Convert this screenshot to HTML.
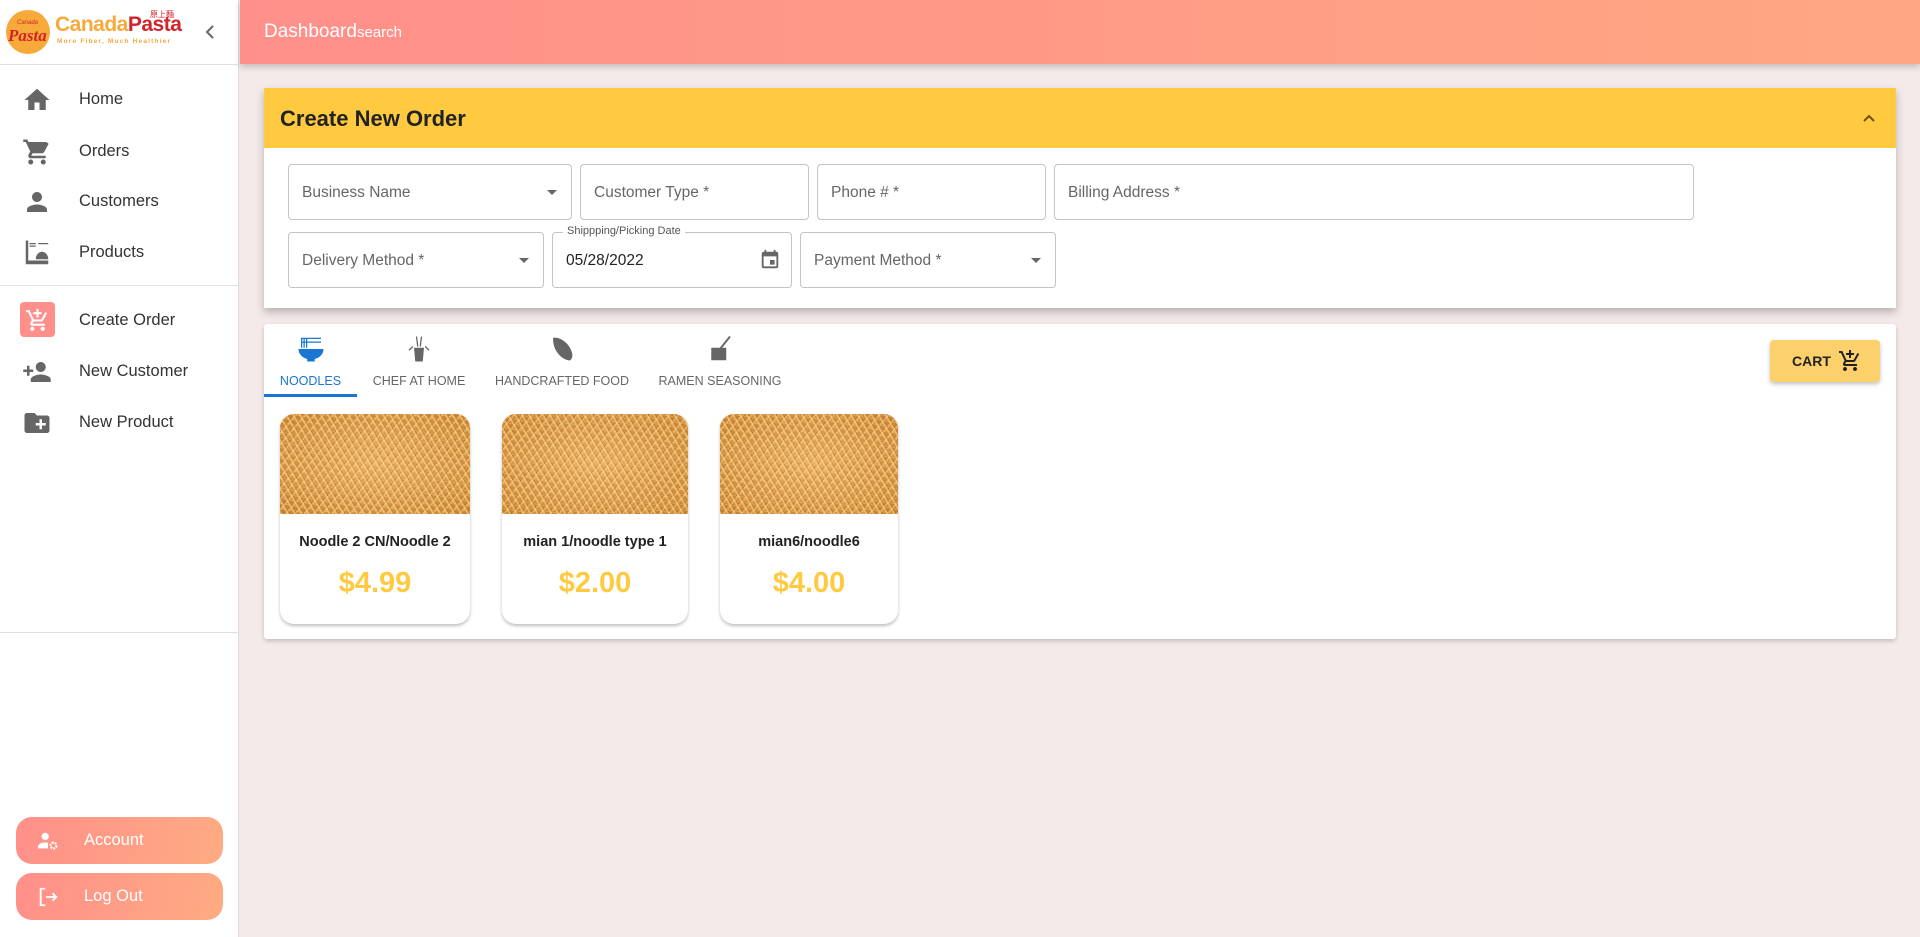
<!DOCTYPE html>
<html><head><meta charset="utf-8"><style>
*{box-sizing:border-box;margin:0;padding:0}
body{width:1920px;height:937px;background:#f4eaea;font-family:"Liberation Sans",sans-serif;position:relative;overflow:hidden;color:#333}
.side{position:absolute;left:0;top:0;width:239px;height:937px;background:#fff;border-right:1px solid #e0dcdc}
.hr{position:absolute;left:0;width:239px;height:1px;background:#e0e0e0}
.nav{position:absolute;left:0;height:40px;width:239px}
.nav svg{position:absolute;left:22px;top:6px;width:30px;height:30px}
.nav span{position:absolute;left:79px;top:11px;font-size:16.5px;color:#333}
.btn{position:absolute;left:16px;width:207px;height:47px;border-radius:16px;background:linear-gradient(100deg,#ff8f8a,#ffab82);color:#fff;font-size:16.5px}
.btn span{position:absolute;left:68px;top:14px}
.btn svg{position:absolute;left:21px;top:13px}
.head{position:absolute;left:240px;top:0;width:1680px;height:64px;background:linear-gradient(90deg,#ff8f8a,#ffa782);box-shadow:0 3px 6px rgba(0,0,0,.2)}
.head span{position:absolute;left:24px;top:21px;color:#fff;font-size:19px}
.card{position:absolute;background:#fff;box-shadow:0 2px 5px rgba(0,0,0,.2)}
.f{position:absolute;border:1px solid #c4c4c4;border-radius:4px;height:56px;font-size:15.5px;color:#666}
.f span{position:absolute;left:13px;top:19px}
.f .dd{position:absolute;right:14px;top:25px;width:0;height:0;border-left:5px solid transparent;border-right:5px solid transparent;border-top:5px solid #666}
.tab{position:absolute;top:334px;text-align:center;font-size:12.5px;color:#666;white-space:nowrap}
.tab svg{display:block;margin:0 auto 10px}
.p{position:absolute;top:414px;height:210px;background:#fff;border-radius:14px;box-shadow:0 2px 3px rgba(0,0,0,.25);overflow:hidden;text-align:center}
.img{height:100px;background:
repeating-linear-gradient(60deg,rgba(255,220,150,.5) 0 2px,rgba(170,100,30,.35) 2px 3px,transparent 3px 6px),
repeating-linear-gradient(-50deg,rgba(255,215,140,.45) 0 2px,rgba(160,90,20,.3) 2px 3px,transparent 3px 7px),
repeating-linear-gradient(10deg,rgba(250,200,120,.4) 0 1px,transparent 1px 5px),
radial-gradient(ellipse at 50% 50%,#eab064,#c88230)}
.p b{display:block;font-size:14.5px;color:#222;margin-top:20px}
.p i{display:block;font-style:normal;font-weight:bold;font-size:29px;color:#ffc940;margin-top:17px}
</style></head><body>
<div class="side">
 <svg style="position:absolute;left:5px;top:9px" width="46" height="46" viewBox="0 0 46 46"><circle cx="23" cy="23" r="22" fill="#f7a93a"/><text x="3" y="32" font-family="Liberation Serif" font-style="italic" font-weight="bold" font-size="17" fill="#d2232a">Pasta</text><text x="12" y="15" font-size="6" font-style="italic" fill="#d2232a">Canada</text></svg>
 <div style="position:absolute;left:55px;top:13px;font-weight:bold;font-size:21px;letter-spacing:-.5px"><span style="color:#f7a93a">Canada</span><span style="color:#d2232a">Pasta</span></div>
 <div style="position:absolute;left:57px;top:38px;font-size:6.5px;font-weight:bold;color:#f7a93a;letter-spacing:1.2px">More Fiber, Much Healthier</div>
 <div style="position:absolute;left:150px;top:9px;font-size:8px;color:#d2232a;font-family:'Noto Sans CJK SC',sans-serif">原上麵</div>
 <svg style="position:absolute;left:204px;top:24px" width="12" height="16" viewBox="0 0 12 16"><path d="M9 2L3 8l6 6" stroke="#666" stroke-width="2" fill="none"/></svg>
 <div class="hr" style="top:64px"></div>
 <div class="nav" style="top:79px"><svg viewBox="0 0 24 24"><path fill="#666" d="M10 20v-6h4v6h5v-8h3L12 3 2 12h3v8z"/></svg><span>Home</span></div>
 <div class="nav" style="top:131px"><svg viewBox="0 0 24 24"><path fill="#666" d="M7 18c-1.1 0-2 .9-2 2s.9 2 2 2 2-.9 2-2-.9-2-2-2zM1 2v2h2l3.6 7.6-1.4 2.4c-.1.3-.2.6-.2 1 0 1.1.9 2 2 2h12v-2H7.4l1.1-2h7.5c.8 0 1.4-.4 1.7-1l3.6-6.5L19.6 4H5.2l-.9-2H1zm16 16c-1.1 0-2 .9-2 2s.9 2 2 2 2-.9 2-2-.9-2-2-2z"/></svg><span>Orders</span></div>
 <div class="nav" style="top:181px"><svg viewBox="0 0 24 24"><path fill="#666" d="M12 12c2.2 0 4-1.8 4-4s-1.8-4-4-4-4 1.8-4 4 1.8 4 4 4zm0 2c-2.7 0-8 1.3-8 4v2h16v-2c0-2.7-5.3-4-8-4z"/></svg><span>Customers</span></div>
 <div class="nav" style="top:232px"><svg viewBox="0 0 24 24"><path fill="#666" d="M3 2h2v16h16v3H3zM6 4h5v1H6zM6 6h5v1H6zM13 4h8v1h-8zM11 17c0-4 3-6 5-6s5 2 5 6z"/></svg><span>Products</span></div>
 <div class="hr" style="top:285px"></div>
 <div class="nav" style="top:300px"><div style="position:absolute;left:20px;top:2px;width:35px;height:35px;background:#ff8f8a;border-radius:4px"></div><svg viewBox="0 0 24 24" style="left:25px;top:8px;width:25px;height:25px"><path fill="#fff" d="M11 9h2V6h3V4h-3V1h-2v3H8v2h3v3zm-4 9c-1.1 0-2 .9-2 2s.9 2 2 2 2-.9 2-2-.9-2-2-2zm10 0c-1.1 0-2 .9-2 2s.9 2 2 2 2-.9 2-2-.9-2-2-2zM7.2 14.8l.9-1.8h7.5c.8 0 1.4-.4 1.7-1l3.9-7-1.7-1-3.9 7H8.5L4.3 2H1v2h2l3.6 7.6-1.4 2.4C4.5 15.4 5.4 17 7 17h12v-2H7.4z"/></svg><span>Create Order</span></div>
 <div class="nav" style="top:351px"><svg viewBox="0 0 24 24"><path fill="#666" d="M15 12c2.2 0 4-1.8 4-4s-1.8-4-4-4-4 1.8-4 4 1.8 4 4 4zm-9-2V7H4v3H1v2h3v3h2v-3h3v-2H6zm9 4c-2.7 0-8 1.3-8 4v2h16v-2c0-2.7-5.3-4-8-4z"/></svg><span>New Customer</span></div>
 <div class="nav" style="top:402px"><svg viewBox="0 0 24 24"><path fill="#666" d="M20 6h-8l-2-2H4c-1.1 0-2 .9-2 2v12c0 1.1.9 2 2 2h16c1.1 0 2-.9 2-2V8c0-1.1-.9-2-2-2zm-1 8h-3v3h-2v-3h-3v-2h3V9h2v3h3v2z"/></svg><span>New Product</span></div>
 <div class="hr" style="top:632px"></div>
 <div class="btn" style="top:817px"><svg width="22" height="22" viewBox="0 0 24 24"><circle cx="9" cy="7" r="4" fill="#fff"/><path fill="#fff" d="M1 20v-2c0-3 5-4.5 8-4.5 1 0 2 .1 3 .4V20z"/><circle cx="18" cy="17" r="3.2" fill="none" stroke="#fff" stroke-width="2.4" stroke-dasharray="2 1.2"/></svg><span>Account</span></div>
 <div class="btn" style="top:873px"><svg width="22" height="22" viewBox="0 0 24 24"><path d="M9 3H4v18h5M10 12h11M17 8l4 4-4 4" stroke="#fff" stroke-width="2" fill="none"/></svg><span>Log Out</span></div>
</div>
<div class="head"><span>Dashboard<small style="font-size:15px">search</small></span></div>

<div class="card" style="left:264px;top:88px;width:1632px;height:220px;box-shadow:0 4px 8px rgba(0,0,0,.25)">
 <div style="height:60px;background:#ffca40;position:relative"><span style="position:absolute;left:16px;top:18px;font-size:22px;font-weight:bold;color:#222">Create New Order</span>
 <svg style="position:absolute;right:20px;top:25px" width="14" height="10" viewBox="0 0 14 10"><path d="M2 8l5-5 5 5" stroke="#6b5218" stroke-width="2" fill="none"/></svg></div>
</div>
<div class="f" style="left:288px;top:164px;width:284px"><span>Business Name</span><div class="dd"></div></div>
<div class="f" style="left:580px;top:164px;width:229px"><span>Customer Type *</span></div>
<div class="f" style="left:817px;top:164px;width:229px"><span>Phone # *</span></div>
<div class="f" style="left:1054px;top:164px;width:640px"><span>Billing Address *</span></div>
<div class="f" style="left:288px;top:232px;width:256px"><span>Delivery Method *</span><div class="dd"></div></div>
<div class="f" style="left:552px;top:232px;width:240px"><span style="color:#222">05/28/2022</span>
 <div style="position:absolute;left:10px;top:-8px;background:#fff;padding:0 4px;font-size:11px;color:#555">Shippping/Picking Date</div>
 <svg style="position:absolute;right:10px;top:16px" width="22" height="22" viewBox="0 0 24 24"><path fill="#666" d="M17 12h-5v5h5v-5zM16 1v2H8V1H6v2H5c-1.1 0-2 .9-2 2v14c0 1.1.9 2 2 2h14c1.1 0 2-.9 2-2V5c0-1.1-.9-2-2-2h-1V1h-2zm3 18H5V8h14v11z"/></svg></div>
<div class="f" style="left:800px;top:232px;width:256px"><span>Payment Method *</span><div class="dd"></div></div>

<div class="card" style="left:264px;top:324px;width:1632px;height:315px;border-radius:3px"></div>
<div class="tab" style="left:264px;width:93px;color:#1976d2"><svg width="30" height="30" viewBox="0 0 24 24"><path fill="#1976d2" d="M2 12h20c0 4-3 7-7 8v2H9v-2c-4-1-7-4-7-8zM4 3h1v8H4zM6 3h1v8H6zM8 3h1v8H8zM4 3h16v1H4zM4 6h16v1H4z"/></svg>NOODLES</div>
<div style="position:absolute;left:264px;top:394px;width:93px;height:3px;background:#1976d2"></div>
<div class="tab" style="left:367px;width:104px"><svg width="30" height="30" viewBox="0 0 24 24"><path fill="#666" d="M8 11h8l-1 11H9z"/><path d="M11 10l-1-8M13 10l1-8M7 10L4 13M17 10l3 3" stroke="#666" stroke-width="1"/></svg>CHEF AT HOME</div>
<div class="tab" style="left:490px;width:144px"><svg width="30" height="30" viewBox="0 0 24 24"><path fill="#666" d="M5 3c5-1 13 4 15 12 1 4-1 7-3 6C11 20 4 12 5 3z"/></svg>HANDCRAFTED FOOD</div>
<div class="tab" style="left:655px;width:130px"><svg width="30" height="30" viewBox="0 0 24 24"><path fill="#666" d="M5 11h12v10H5z"/><path d="M12 12l8-10" stroke="#666" stroke-width="1.5"/></svg>RAMEN SEASONING</div>
<div style="position:absolute;left:1770px;top:340px;width:110px;height:42px;background:#fcd06a;border-radius:4px;box-shadow:0 2px 4px rgba(0,0,0,.25);font-size:14px;font-weight:bold;color:#222"><span style="position:absolute;left:22px;top:13px">CART</span>
<svg style="position:absolute;left:68px;top:9px" width="24" height="24" viewBox="0 0 24 24"><path fill="#222" d="M11 9h2V6h3V4h-3V1h-2v3H8v2h3v3zm-4 9c-1.1 0-2 .9-2 2s.9 2 2 2 2-.9 2-2-.9-2-2-2zm10 0c-1.1 0-2 .9-2 2s.9 2 2 2 2-.9 2-2-.9-2-2-2zM7.2 14.8l.9-1.8h7.5c.8 0 1.4-.4 1.7-1l3.9-7-1.7-1-3.9 7H8.5L4.3 2H1v2h2l3.6 7.6-1.4 2.4C4.5 15.4 5.4 17 7 17h12v-2H7.4z"/></svg></div>

<div class="p" style="left:280px;width:190px"><div class="img"></div><b>Noodle 2 CN/Noodle 2</b><i>$4.99</i></div>
<div class="p" style="left:502px;width:186px"><div class="img"></div><b>mian 1/noodle type 1</b><i>$2.00</i></div>
<div class="p" style="left:720px;width:178px"><div class="img"></div><b>mian6/noodle6</b><i>$4.00</i></div>
</body></html>
